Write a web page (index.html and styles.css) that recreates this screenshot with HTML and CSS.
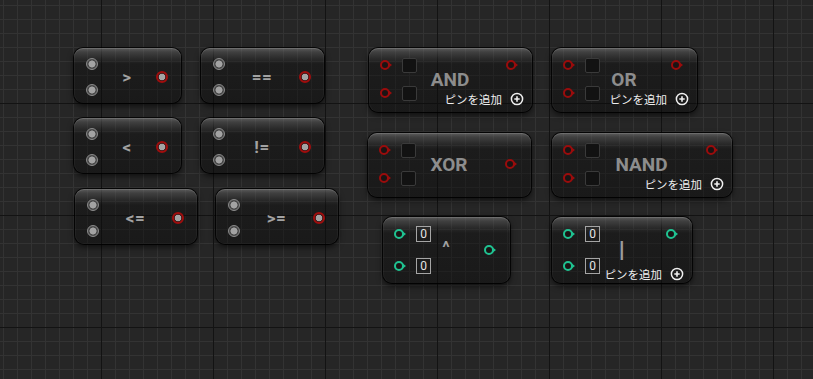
FILE: index.html
```html
<!DOCTYPE html>
<html lang="ja">
<head>
<meta charset="utf-8">
<title>Blueprint nodes</title>
<link rel="stylesheet" href="styles.css">
</head>
<body>
<div class="graph">
  <!-- comparison nodes -->
  <div class="node cmp n-gt">
    <div class="in r1"><span class="pin grey"></span></div>
    <div class="in r2"><span class="pin grey"></span></div>
    <div class="title sm">&gt;</div>
    <div class="out mid"><span class="pin grey red"></span></div>
  </div>
  <div class="node cmp n-eq">
    <div class="in r1"><span class="pin grey"></span></div>
    <div class="in r2"><span class="pin grey"></span></div>
    <div class="title sm">==</div>
    <div class="out mid"><span class="pin grey red"></span></div>
  </div>
  <div class="node cmp n-lt">
    <div class="in r1"><span class="pin grey"></span></div>
    <div class="in r2"><span class="pin grey"></span></div>
    <div class="title sm">&lt;</div>
    <div class="out mid"><span class="pin grey red"></span></div>
  </div>
  <div class="node cmp n-ne">
    <div class="in r1"><span class="pin grey"></span></div>
    <div class="in r2"><span class="pin grey"></span></div>
    <div class="title sm">!=</div>
    <div class="out mid"><span class="pin grey red"></span></div>
  </div>
  <div class="node cmp n-le">
    <div class="in r1"><span class="pin grey"></span></div>
    <div class="in r2"><span class="pin grey"></span></div>
    <div class="title sm">&lt;=</div>
    <div class="out mid"><span class="pin grey red"></span></div>
  </div>
  <div class="node cmp n-ge">
    <div class="in r1"><span class="pin grey"></span></div>
    <div class="in r2"><span class="pin grey"></span></div>
    <div class="title sm">&gt;=</div>
    <div class="out mid"><span class="pin grey red"></span></div>
  </div>

  <!-- boolean nodes -->
  <div class="node bool n-and">
    <div class="in r1"><span class="pin arrow bpin"></span><span class="check"></span></div>
    <div class="in r2"><span class="pin arrow bpin"></span><span class="check"></span></div>
    <div class="title lg">AND</div>
    <div class="out top"><span class="pin arrow bpin"></span></div>
    <div class="add"><span class="add-label">ピンを追加</span><svg class="plus" viewBox="0 0 14 14" width="14" height="14"><circle cx="7" cy="7" r="5.6" fill="none" stroke="#f0f0f0" stroke-width="1.5"/><path d="M7 4.3v5.4M4.3 7h5.4" stroke="#f0f0f0" stroke-width="1.6"/></svg></div>
  </div>
  <div class="node bool n-or">
    <div class="in r1"><span class="pin arrow bpin"></span><span class="check"></span></div>
    <div class="in r2"><span class="pin arrow bpin"></span><span class="check"></span></div>
    <div class="title lg">OR</div>
    <div class="out top"><span class="pin arrow bpin"></span></div>
    <div class="add"><span class="add-label">ピンを追加</span><svg class="plus" viewBox="0 0 14 14" width="14" height="14"><circle cx="7" cy="7" r="5.6" fill="none" stroke="#f0f0f0" stroke-width="1.5"/><path d="M7 4.3v5.4M4.3 7h5.4" stroke="#f0f0f0" stroke-width="1.6"/></svg></div>
  </div>
  <div class="node bool n-xor">
    <div class="in r1"><span class="pin arrow bpin"></span><span class="check"></span></div>
    <div class="in r2"><span class="pin arrow bpin"></span><span class="check"></span></div>
    <div class="title lg">XOR</div>
    <div class="out mid"><span class="pin arrow bpin"></span></div>
  </div>
  <div class="node bool n-nand">
    <div class="in r1"><span class="pin arrow bpin"></span><span class="check"></span></div>
    <div class="in r2"><span class="pin arrow bpin"></span><span class="check"></span></div>
    <div class="title lg">NAND</div>
    <div class="out top"><span class="pin arrow bpin"></span></div>
    <div class="add"><span class="add-label">ピンを追加</span><svg class="plus" viewBox="0 0 14 14" width="14" height="14"><circle cx="7" cy="7" r="5.6" fill="none" stroke="#f0f0f0" stroke-width="1.5"/><path d="M7 4.3v5.4M4.3 7h5.4" stroke="#f0f0f0" stroke-width="1.6"/></svg></div>
  </div>

  <!-- integer bitwise nodes -->
  <div class="node int n-xorb">
    <div class="in r1"><span class="pin arrow ipin"></span><span class="num">0</span></div>
    <div class="in r2"><span class="pin arrow ipin"></span><span class="num">0</span></div>
    <div class="title caret">^</div>
    <div class="out mid"><span class="pin arrow ipin"></span></div>
  </div>
  <div class="node int n-orb">
    <div class="in r1"><span class="pin arrow ipin"></span><span class="num">0</span></div>
    <div class="in r2"><span class="pin arrow ipin"></span><span class="num">0</span></div>
    <div class="title bar">|</div>
    <div class="out top"><span class="pin arrow ipin"></span></div>
    <div class="add"><span class="add-label">ピンを追加</span><svg class="plus" viewBox="0 0 14 14" width="14" height="14"><circle cx="7" cy="7" r="5.6" fill="none" stroke="#f0f0f0" stroke-width="1.5"/><path d="M7 4.3v5.4M4.3 7h5.4" stroke="#f0f0f0" stroke-width="1.6"/></svg></div>
  </div>
</div>
</body>
</html>
```

FILE: styles.css
```css
html, body {
  margin: 0;
  padding: 0;
  width: 100%;
  height: 100%;
  overflow: hidden;
}

body {
  background-color: #262626;
  background-image:
    linear-gradient(to right, #131313 1px, transparent 1px),
    linear-gradient(to bottom, #131313 1px, transparent 1px),
    linear-gradient(to right, #333333 1px, transparent 1px),
    linear-gradient(to bottom, #333333 1px, transparent 1px);
  background-size: 112px 112px, 112px 112px, 14px 14px, 14px 14px;
  background-position: 101px 0, 0 103px, 3px 0, 0 5px;
  font-family: Roboto, "Noto Sans CJK JP", sans-serif;
}

.graph {
  position: relative;
  width: 813px;
  height: 379px;
}

/* ---------- node shell ---------- */
.node {
  position: absolute;
  box-sizing: border-box;
  display: grid;
  grid-template-columns: auto 1fr auto;
  border-radius: 9px;
  background:
    linear-gradient(to bottom,
      rgba(125, 125, 125, 0.62) 0px,
      rgba(90, 90, 90, 0.5) 4px,
      rgba(55, 55, 55, 0.35) 10px,
      rgba(14, 14, 14, 0.42) 16px,
      rgba(10, 10, 10, 0.45) 100%);
  box-shadow:
    0 0 0 1px rgba(0, 0, 0, 0.85),
    inset 0 1px 0 rgba(255, 255, 255, 0.12),
    inset 1px 0 0 rgba(255, 255, 255, 0.04),
    inset -1px 0 0 rgba(255, 255, 255, 0.04),
    0 3px 6px rgba(0, 0, 0, 0.65);
}

.cmp {
  height: 55px;
  grid-template-rows: 26px 26px;
  padding: 3px 13px 0 12px;
}

.bool {
  height: 64px;
  grid-template-rows: 28px 28px;
  padding: 3px 12px 0 11px;
}

.int {
  height: 66px;
  grid-template-rows: 32px 32px;
  padding: 1px 12px 0 11px;
}

/* node placement on the graph canvas */
.n-gt  { left: 74px;  top: 48px;  width: 107px; }
.n-eq  { left: 201px; top: 48px;  width: 123px; }
.n-lt  { left: 74px;  top: 118px; width: 107px; }
.n-ne  { left: 201px; top: 118px; width: 123px; }
.n-le  { left: 75px;  top: 189px; width: 122px; }
.n-ge  { left: 216px; top: 189px; width: 122px; }

.n-and  { left: 369px; top: 48px;  width: 163px; }
.n-or   { left: 552px; top: 48px;  width: 145px; }
.n-xor  { left: 368px; top: 133px; width: 163px; }
.n-nand { left: 552px; top: 133px; width: 180px; }

.n-xorb { left: 383px; top: 217px; width: 127px; }
.n-orb  { left: 552px; top: 217px; width: 140px; }

/* ---------- grid cells ---------- */
.in {
  grid-column: 1;
  display: flex;
  align-items: center;
  gap: 8px;
}
.r1 { grid-row: 1; }
.r2 { grid-row: 2; }

.out {
  grid-column: 3;
  display: flex;
  align-items: center;
}
.out.mid { grid-row: 1 / -1; }
.out.top { grid-row: 1; }

.title {
  grid-column: 1 / -1;
  grid-row: 1 / -1;
  justify-self: center;
  align-self: center;
  font-weight: 700;
  line-height: 1;
}
.title.sm {
  font-size: 17px;
  color: #a2a2a2;
  letter-spacing: 0.5px;
}
.title.lg {
  font-size: 19px;
  color: #8d8d8d;
}
.title.caret {
  font-size: 17px;
  color: #a0a0a0;
  margin-bottom: 6px;
}
.title.bar {
  font-size: 22px;
  color: #9c9c9c;
  font-weight: 400;
  transform: scaleX(1.4);
}

.add {
  grid-column: 2 / -1;
  grid-row: 2;
  justify-self: end;
  align-self: end;
  display: flex;
  align-items: center;
  gap: 8px;
  margin-right: -4px;
  margin-bottom: 1px;
}
.add-label {
  font-family: "Noto Sans CJK JP", sans-serif;
  font-size: 11.5px;
  line-height: 14px;
  color: #efefef;
}
.plus { display: block; }

/* ---------- pins ---------- */
.pin {
  display: block;
  position: relative;
  box-sizing: border-box;
  border-radius: 50%;
  flex: none;
}

.pin.grey {
  width: 12px;
  height: 12px;
  border: 1.5px solid #8c8c8c;
  background: radial-gradient(circle, #a3a3a3 0 3.2px, #484848 3.8px);
}
.pin.grey.red {
  border: 2px solid #a10d0d;
  background: radial-gradient(circle, #a3a3a3 0 3px, #3a1a1a 3.6px);
}

.pin.arrow {
  width: 10px;
  height: 10px;
  margin-right: 4px;
  border: 2px solid currentColor;
  background: #1a1414;
}
.pin.arrow::after {
  content: "";
  position: absolute;
  left: 100%;
  top: 50%;
  margin-top: -3px;
  border-left: 4px solid currentColor;
  border-top: 3px solid transparent;
  border-bottom: 3px solid transparent;
}
.bpin { color: #9a0c0c; }
.ipin { color: #1fc291; background: #141a18; }

.check {
  display: block;
  width: 15px;
  height: 15px;
  box-sizing: border-box;
  background: #121212;
  border: 1px solid #3a3a3a;
  border-radius: 2px;
}

.num {
  display: flex;
  align-items: center;
  justify-content: center;
  width: 15px;
  height: 16px;
  box-sizing: border-box;
  border: 1px solid #a5a5a5;
  color: #e4e4e4;
  font-size: 12px;
  line-height: 1;
}
```
